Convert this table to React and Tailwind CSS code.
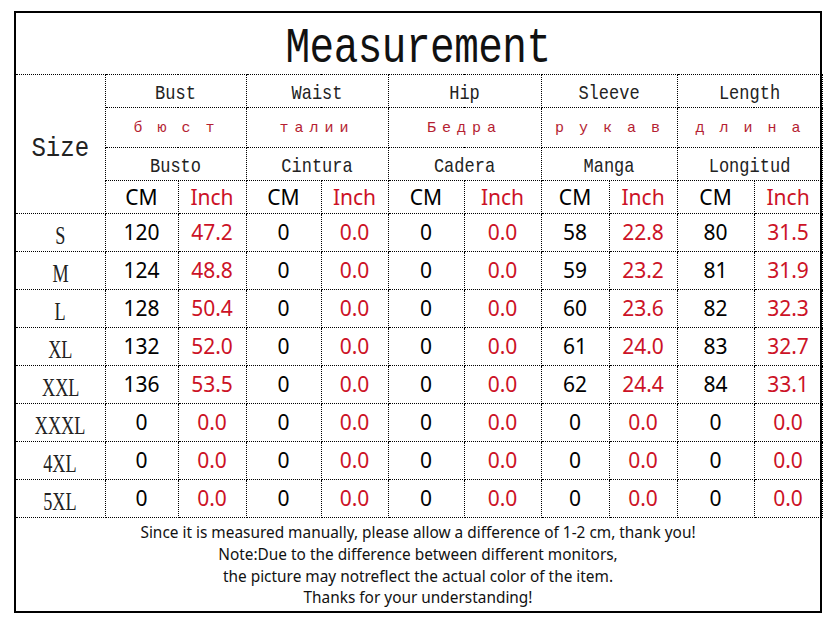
const groups = [
  { en: "Bust", ru: "б ю с т", ruTrack: "tracking-[3px]", es: "Busto" },
  { en: "Waist", ru: "талии", ruTrack: "tracking-[6px]", es: "Cintura" },
  { en: "Hip", ru: "Бедра", ruTrack: "tracking-[6px]", es: "Cadera" },
  { en: "Sleeve", ru: "р у к а в", ruTrack: "tracking-[3px]", es: "Manga" },
  { en: "Length", ru: "д л и н а", ruTrack: "tracking-[3px]", es: "Longitud" },
];

const rows = [
  ["S", "120", "47.2", "0", "0.0", "0", "0.0", "58", "22.8", "80", "31.5"],
  ["M", "124", "48.8", "0", "0.0", "0", "0.0", "59", "23.2", "81", "31.9"],
  ["L", "128", "50.4", "0", "0.0", "0", "0.0", "60", "23.6", "82", "32.3"],
  ["XL", "132", "52.0", "0", "0.0", "0", "0.0", "61", "24.0", "83", "32.7"],
  ["XXL", "136", "53.5", "0", "0.0", "0", "0.0", "62", "24.4", "84", "33.1"],
  ["XXXL", "0", "0.0", "0", "0.0", "0", "0.0", "0", "0.0", "0", "0.0"],
  ["4XL", "0", "0.0", "0", "0.0", "0", "0.0", "0", "0.0", "0", "0.0"],
  ["5XL", "0", "0.0", "0", "0.0", "0", "0.0", "0", "0.0", "0", "0.0"],
];

const widths = [89, 73, 68, 75, 67, 76, 77, 68, 68, 77, 68];

const mono = "font-['Liberation_Mono',monospace]";
const sans = "font-['Noto_Sans',sans-serif]";
const cell = "border border-dotted border-black p-0 text-center leading-none";

export default function App() {
  return (
    <div className="w-[837px] h-[623px] bg-white pt-[11px] pl-[14px]">
      <div className="w-[808px] h-[602px] border-2 border-black flex flex-col">
        <div className={`h-[61px] shrink-0 flex items-center justify-center pt-[12px] text-[41px] leading-none text-[#111] tracking-[-0.5px] ${mono}`}>
          <span className="inline-block scale-y-[1.2]">Measurement</span>
        </div>
        <table className="w-full table-fixed border-collapse">
          <colgroup>
            {widths.map((w, i) => (
              <col key={i} style={{ width: w }} />
            ))}
          </colgroup>
          <tbody>
            <tr className="h-[33px]">
              <td rowSpan={4} className={`${cell} border-l-0 pt-[10px] text-[24px] text-[#222] ${mono}`}>
                <span className="inline-block scale-y-[1.15]">Size</span>
              </td>
              {groups.map((g) => (
                <td key={g.en} colSpan={2} className={`${cell} pt-[4px] text-[17px] text-[#222] ${mono}`}>
                  <span className="inline-block scale-y-[1.15]">{g.en}</span>
                </td>
              ))}
            </tr>
            <tr className="h-[40px]">
              {groups.map((g) => (
                <td key={g.en} colSpan={2} className={`${cell} pt-[2px] text-[15px] text-[#b51e32] ${g.ruTrack} ${mono}`}>
                  {g.ru}
                </td>
              ))}
            </tr>
            <tr className="h-[33px]">
              {groups.map((g) => (
                <td key={g.en} colSpan={2} className={`${cell} pt-[4px] text-[17px] text-[#222] ${mono}`}>
                  <span className="inline-block scale-y-[1.15]">{g.es}</span>
                </td>
              ))}
            </tr>
            <tr className="h-[33px]">
              {groups.map((g) => [
                <td key={g.en + "cm"} className={`${cell} text-[21px] text-black ${sans}`}>CM</td>,
                <td key={g.en + "in"} className={`${cell} text-[21px] text-[#cc1226] ${sans}`}>Inch</td>,
              ])}
            </tr>
            {rows.map((r) => (
              <tr key={r[0]} className="h-[38px]">
                <td className={`${cell} border-l-0 text-[26px] text-[#222] font-['Liberation_Serif',serif]`}>
                  <span className="inline-block scale-x-[0.7] translate-y-[3px]">{r[0]}</span>
                </td>
                {r.slice(1).map((v, i) => (
                  <td
                    key={i}
                    className={`${cell} text-[21px] ${i % 2 ? "text-[#cc1226]" : "text-black"} ${sans}`}
                  >
                    {v}
                  </td>
                ))}
              </tr>
            ))}
          </tbody>
        </table>
        <div className={`flex-1 flex flex-col items-center justify-center pt-[2px] text-[15.4px] leading-[21.7px] text-[#111] ${sans}`}>
          <p>Since it is measured manually, please allow a difference of 1-2 cm, thank you!</p>
          <p>Note:Due to the difference between different monitors,</p>
          <p>the picture may notreflect the actual color of the item.</p>
          <p>Thanks for your understanding!</p>
        </div>
      </div>
    </div>
  );
}
